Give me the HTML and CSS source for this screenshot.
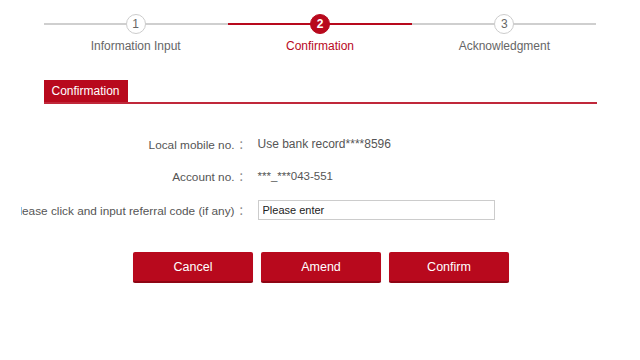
FILE: index.html
```html
<!DOCTYPE html>
<html lang="en">
<head>
    <meta charset="UTF-8">
    <meta name="viewport" content="width=device-width, initial-scale=1.0">
    <title>Referral Code - Confirmation</title>
    <link rel="stylesheet" href="styles.css">
</head>
<body>
    <div class="page">
        <!-- Steps -->
        <div class="steps">
            <div class="step">
                <div class="step-track">
                    <span class="step-num">1</span>
                </div>
                <div class="step-label">Information Input</div>
            </div>
            <div class="step active">
                <div class="step-track">
                    <span class="step-num">2</span>
                </div>
                <div class="step-label">Confirmation</div>
            </div>
            <div class="step">
                <div class="step-track">
                    <span class="step-num">3</span>
                </div>
                <div class="step-label">Acknowledgment</div>
            </div>
        </div>

        <!-- Tab header -->
        <div class="tab-bar">
            <span class="tab">Confirmation</span>
        </div>

        <!-- Form -->
        <div class="form">
            <div class="form-row">
                <div class="form-label"><span>Local mobile no.<span class="colon">：</span></span></div>
                <div class="form-value">Use bank record****8596</div>
            </div>
            <div class="form-row">
                <div class="form-label"><span>Account no.<span class="colon">：</span></span></div>
                <div class="form-value small">***_***043-551</div>
            </div>
            <div class="form-row input-row">
                <div class="form-label"><span>Please click and input referral code (if any)<span class="colon">：</span></span></div>
                <div class="form-value"><input class="text-input" type="text" placeholder="Please enter"></div>
            </div>
        </div>

        <div class="actions">
            <button class="btn">Cancel</button>
            <button class="btn">Amend</button>
            <button class="btn">Confirm</button>
        </div>
    </div>
</body>
</html>
```

FILE: styles.css
```css
* { box-sizing: border-box; margin: 0; padding: 0; }
body { font-family: "Liberation Sans", Arial, sans-serif; background: #fff; color: #555; overflow: hidden; }
.page { width: 553px; margin: 0 auto; }

/* steps */
.steps { display: flex; padding-top: 14px; }
.step { flex: 1; display: flex; flex-direction: column; align-items: center; }
.step-track { width: 100%; height: 20px; display: flex; align-items: center; justify-content: center; background: linear-gradient(#cfcfcf, #cfcfcf) center / 100% 2px no-repeat; }
.step-num { width: 20px; height: 20px; border-radius: 50%; border: 1px solid #ccc; background: #fff; color: #666; font-size: 12px; line-height: 18px; text-align: center; }
.step-label { margin-top: 5px; font-size: 12px; color: #666; }
.step.active .step-track { background-image: linear-gradient(#b8091d, #b8091d); }
.step.active .step-num { background: #b8091d; border-color: #b8091d; color: #fff; font-weight: bold; }
.step.active .step-label { color: #b8091d; }

/* tab */
.tab-bar { margin-top: 27px; border-bottom: 2px solid #c0283a; display: flex; }
.tab { background: #b8091d; color: #fff; font-size: 12px; padding: 0 8px; height: 22px; line-height: 22px; }

/* form */
.form { margin: 30px 0 0 -23px; overflow: hidden; }
.form-row { display: flex; align-items: center; height: 20px; margin-bottom: 12px; }
.form-row.input-row { margin-top: 14px; margin-bottom: 0; }
.form-label { width: 229px; flex-shrink: 0; display: flex; justify-content: flex-end; white-space: nowrap; font-size: 11.8px; color: #555; }
.colon { font-family: "Noto Sans CJK SC", sans-serif; font-size: 11px; color: #888; margin-left: 4px; }
.form-value { margin-left: 8px; font-size: 12px; color: #555; }
.form-value.small { font-size: 11.5px; }
.text-input { width: 237px; height: 20px; border: 1px solid #ccc; padding: 0 4px; font-family: "Liberation Sans", Arial, sans-serif; font-size: 11px; color: #333; }
.text-input::placeholder { color: #222; }

/* buttons */
.actions { display: flex; justify-content: center; gap: 8px; margin-top: 32px; padding-left: 2px; }
.btn { width: 120px; height: 31px; border: none; border-bottom: 2px solid #8e0514; border-radius: 2px; background: #b8091d; color: #fff; font-family: "Liberation Sans", Arial, sans-serif; font-size: 12.5px; cursor: pointer; box-shadow: 0 1px 1px rgba(0, 0, 0, 0.15); }
```
